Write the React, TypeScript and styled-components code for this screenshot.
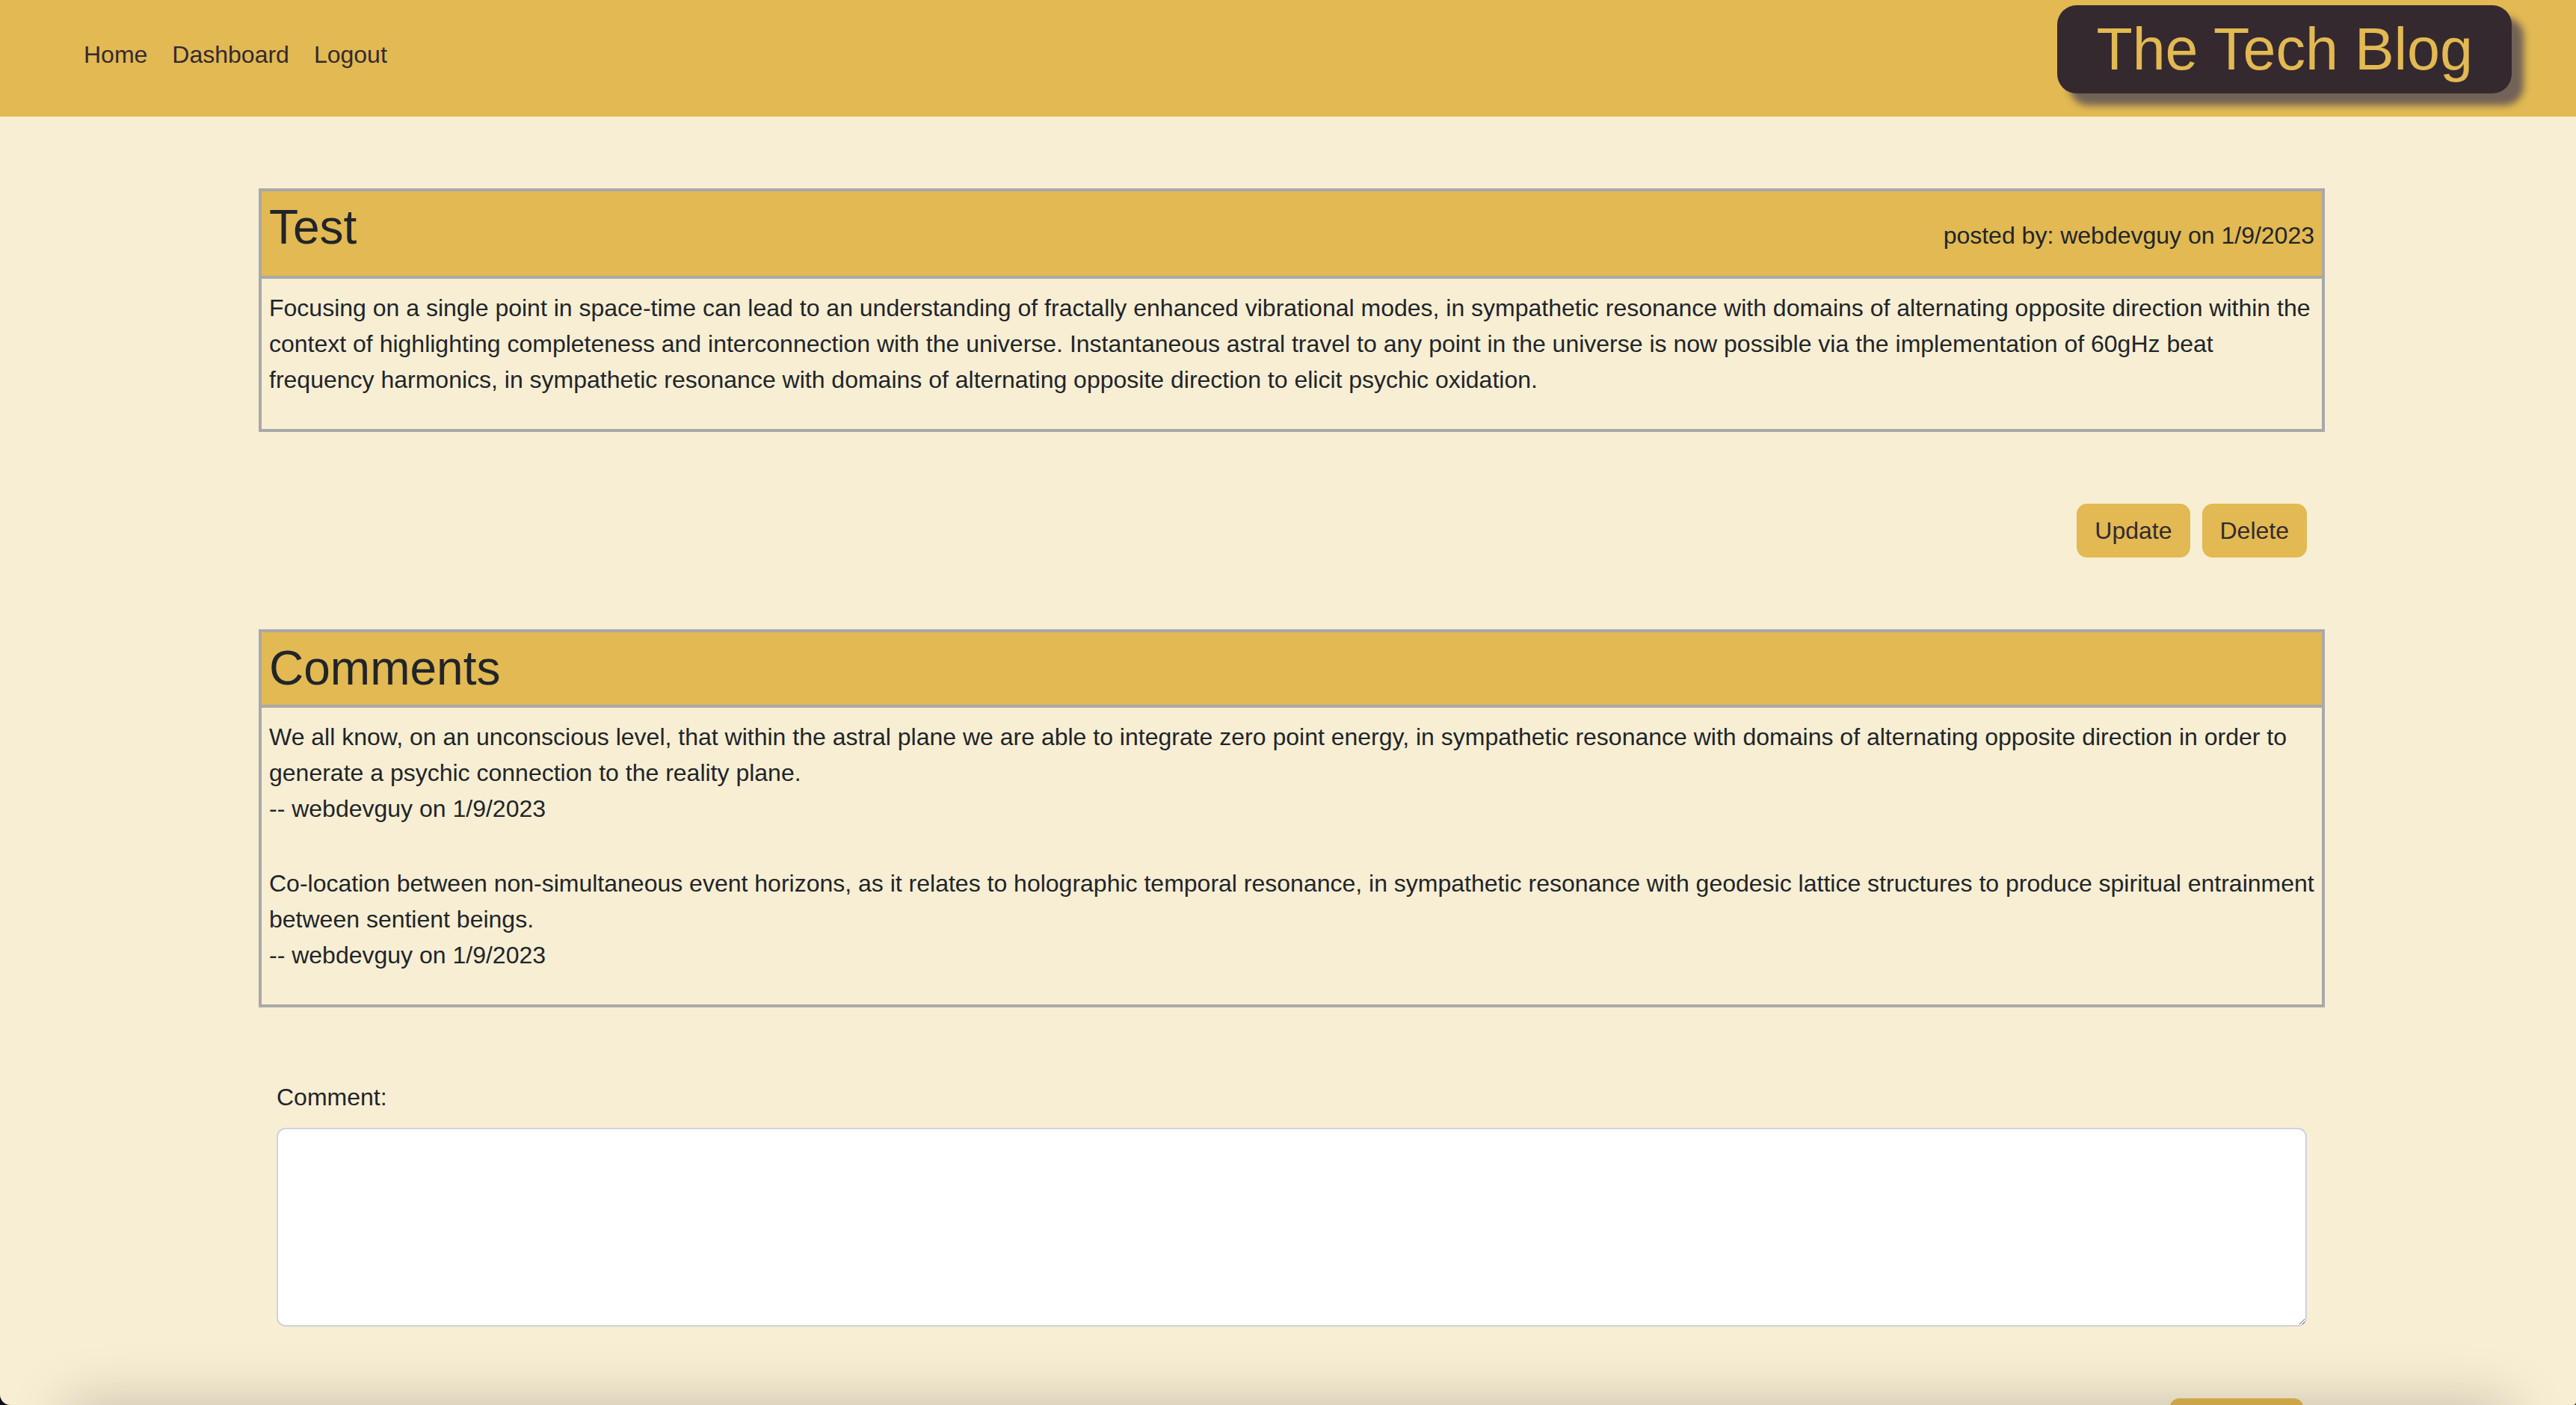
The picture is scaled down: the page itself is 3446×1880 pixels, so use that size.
import React from "react";
import styled, { createGlobalStyle } from "styled-components";

const GOLD = "#e2b952";
const CREAM = "#f8eed3";
const DARK = "#352930";
const INK = "#212529";
const LINE = "#a9a9a9";

const GlobalStyle = createGlobalStyle`
  html, body {
    margin: 0;
    padding: 0;
    background: #0c0b1c;
  }
  body {
    font-family: "Liberation Sans", Arial, Helvetica, sans-serif;
    color: ${INK};
  }
  *, *::before, *::after {
    box-sizing: border-box;
  }
`;

const Page = styled.div`
  position: relative;
  height: 100vh;
  overflow: hidden;
  background: ${CREAM};
  border-radius: 0 0 4px 14px;
`;

const Header = styled.header`
  display: flex;
  justify-content: space-between;
  align-items: flex-start;
  height: 156px;
  padding: 0 86px 0 112px;
  background: ${GOLD};
`;

const Nav = styled.nav`
  display: flex;
  gap: 33px;
  padding-top: 49px;
`;

const NavLink = styled.a`
  font-size: 32px;
  line-height: 48px;
  color: ${DARK};
  text-decoration: none;
`;

const Logo = styled.h1`
  margin: 7px 0 0;
  padding: 13px 52px;
  background: ${DARK};
  color: ${GOLD};
  font-size: 79px;
  font-weight: 400;
  line-height: normal;
  border-radius: 26px;
  box-shadow: 16px 16px 10px rgba(45, 45, 90, 0.62);
`;

const Main = styled.main`
  width: 2764px;
  margin: 96px 0 0 346px;
`;

const Card = styled.section`
  border: 4px solid ${LINE};
`;

const CardHeader = styled.div`
  display: flex;
  justify-content: space-between;
  align-items: baseline;
  padding: 10px;
  background: ${GOLD};
  border-bottom: 4px solid ${LINE};
`;

const CardTitle = styled.h2<{ $spaced?: boolean }>`
  margin: 0 0 ${(p) => (p.$spaced ? "16px" : "0")};
  font-size: 64px;
  line-height: 1.2;
  font-weight: 500;
  color: ${INK};
`;

const Meta = styled.span`
  font-size: 32px;
  line-height: 48px;
  color: ${INK};
`;

const CardBody = styled.div`
  padding: 15px 10px 10px;
  font-size: 32px;
  line-height: 48px;
`;

const Para = styled.p`
  margin: 0 0 32px;
`;

const CommentItem = styled.p`
  margin: 0 0 52px;
  &:last-child {
    margin-bottom: 32px;
  }
`;

const ButtonRow = styled.div`
  display: flex;
  justify-content: flex-end;
  gap: 16px;
  margin: 96px 0;
  padding: 0 24px;
`;

const Button = styled.button`
  padding: 12px 24px;
  border: none;
  border-radius: 14px;
  background: ${GOLD};
  color: ${DARK};
  font-family: "Liberation Sans", Arial, sans-serif;
  font-size: 32px;
  line-height: 48px;
  cursor: pointer;
`;

const SubmitButton = styled(Button)`
  padding: 12px 40px;
`;

const CommentForm = styled.form`
  margin-top: 96px;
  padding: 0 24px;
`;

const Label = styled.label`
  display: block;
  margin-bottom: 17px;
  font-size: 32px;
  line-height: 48px;
  color: ${INK};
`;

const TextArea = styled.textarea`
  display: block;
  width: 100%;
  height: 266px;
  padding: 12px 24px;
  border: 2px solid #ced4da;
  border-radius: 12px;
  background: #ffffff;
  color: ${INK};
  font-family: "Liberation Sans", Arial, sans-serif;
  font-size: 32px;
  line-height: 48px;
  resize: vertical;
  outline: none;
`;

const FormActions = styled.div`
  display: flex;
  justify-content: flex-end;
  margin-top: 96px;
  padding-right: 4px;
`;

const BottomShade = styled.div`
  position: absolute;
  left: 90px;
  right: 90px;
  top: 100%;
  height: 120px;
  box-shadow: 0 0 80px rgba(0, 0, 0, 0.21);
  pointer-events: none;
  z-index: 5;
`;

const comments = [
  "We all know, on an unconscious level, that within the astral plane we are able to integrate zero point energy, in sympathetic resonance with domains of alternating opposite direction in order to generate a psychic connection to the reality plane.",
  "Co-location between non-simultaneous event horizons, as it relates to holographic temporal resonance, in sympathetic resonance with geodesic lattice structures to produce spiritual entrainment between sentient beings.",
];

export default function App() {
  return (
    <>
      <GlobalStyle />
      <Page>
        <Header>
          <Nav>
            <NavLink href="#">Home</NavLink>
            <NavLink href="#">Dashboard</NavLink>
            <NavLink href="#">Logout</NavLink>
          </Nav>
          <Logo>The Tech Blog</Logo>
        </Header>
        <Main>
          <Card>
            <CardHeader>
              <CardTitle $spaced>Test</CardTitle>
              <Meta>posted by: webdevguy on 1/9/2023</Meta>
            </CardHeader>
            <CardBody>
              <Para>
                Focusing on a single point in space-time can lead to an understanding of fractally
                enhanced vibrational modes, in sympathetic resonance with domains of alternating
                opposite direction within the context of highlighting completeness and
                interconnection with the universe. Instantaneous astral travel to any point in the
                universe is now possible via the implementation of 60gHz beat frequency harmonics,
                in sympathetic resonance with domains of alternating opposite direction to elicit
                psychic oxidation.
              </Para>
            </CardBody>
          </Card>
          <ButtonRow>
            <Button type="button">Update</Button>
            <Button type="button">Delete</Button>
          </ButtonRow>
          <Card>
            <CardHeader>
              <CardTitle>Comments</CardTitle>
            </CardHeader>
            <CardBody>
              {comments.map((c, i) => (
                <CommentItem key={i}>
                  {c}
                  <br />
                  -- webdevguy on 1/9/2023
                </CommentItem>
              ))}
            </CardBody>
          </Card>
          <CommentForm onSubmit={(e) => e.preventDefault()}>
            <Label htmlFor="comment">Comment:</Label>
            <TextArea id="comment" />
            <FormActions>
              <SubmitButton type="submit">Submit</SubmitButton>
            </FormActions>
          </CommentForm>
        </Main>
        <BottomShade />
      </Page>
    </>
  );
}
